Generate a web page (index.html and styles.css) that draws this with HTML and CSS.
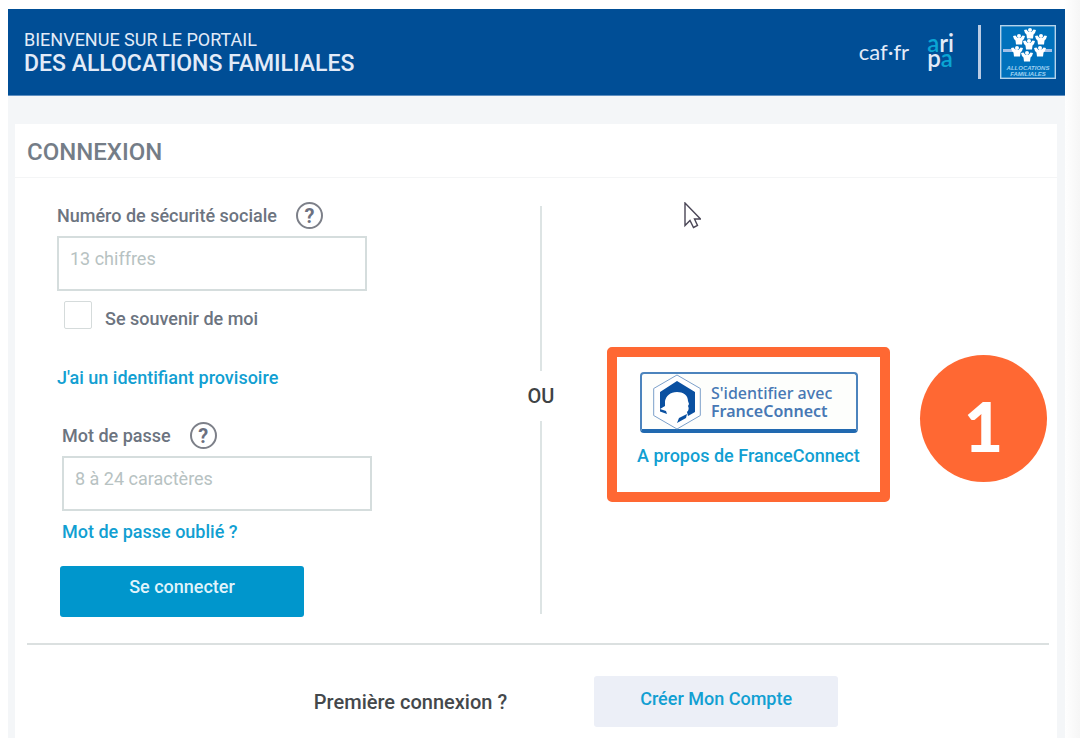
FILE: index.html
```html
<!DOCTYPE html>
<html lang="fr">
<head>
  <meta charset="UTF-8">
  <title>Connexion - Allocations familiales</title>
  <meta name="viewport" content="width=device-width, initial-scale=1.0">
  <link rel="stylesheet" href="styles.css">
</head>
<body>

  <div class="portal">
    <header class="top-bar">
      <div class="welcome">
        <div class="welcome-small">BIENVENUE SUR LE PORTAIL</div>
        <div class="welcome-big">DES ALLOCATIONS FAMILIALES</div>
      </div>
      <div class="brands">
        <span class="brand-caf">caf·fr</span>
        <span class="brand-aripa"><span><i>a</i>ri</span><span>p<i>a</i></span></span>
        <span class="brand-line"></span>
        <svg class="brand-logo" viewBox="0 0 56 54">
          <defs>
            <g id="figure">
              <circle cx="0" cy="-3" r="2"/>
              <path d="M-6 -3 L-3.500 -3.500 L-1.500 -1 L1.500 -1 L3.500 -3.500 L6 -3 L5 0 L3.500 1.500 L3 5.500 L-3 5.500 L-3.500 1.500 L-5 0 Z"/>
            </g>
          </defs>
          <rect x="0.7" y="0.7" width="54.6" height="52.6" fill="#0071bc" stroke="#b5d3ea" stroke-width="1.4"/>
          <path d="M3 25.500 H17 M39 25.500 H52" stroke="#a3bfe6" stroke-width="3"/>
          <g fill="#fff">
            <use href="#figure" x="30" y="8"/>
            <use href="#figure" x="19" y="14"/>
            <use href="#figure" x="41" y="14"/>
            <use href="#figure" x="29" y="19"/>
            <use href="#figure" x="17" y="26"/>
            <use href="#figure" x="40" y="26"/>
            <use href="#figure" x="27" y="31"/>
          </g>
          <text x="28" y="45" class="logo-text">ALLOCATIONS</text>
          <text x="28" y="51" class="logo-text">FAMILIALES</text>
        </svg>
      </div>
    </header>

    <main class="card">
      <h1 class="card-title">CONNEXION</h1>

      <div class="login">
        <form class="login-form">
          <div class="label-row">
            <label for="numero">Numéro de sécurité sociale</label>
            <button type="button" class="help" aria-label="Aide numéro">?</button>
          </div>
          <input type="text" id="numero" class="field" placeholder="13 chiffres">

          <div class="remember">
            <input type="checkbox" id="souvenir">
            <label for="souvenir">Se souvenir de moi</label>
          </div>

          <a href="#" class="link">J'ai un identifiant provisoire</a>

          <div class="password-group">
            <div class="label-row">
              <label for="motdepasse">Mot de passe</label>
              <button type="button" class="help" aria-label="Aide mot de passe">?</button>
            </div>
            <input type="password" id="motdepasse" class="field" placeholder="8 à 24 caractères">
            <a href="#" class="link">Mot de passe oublié ?</a>
          </div>

          <button type="submit" class="btn btn-primary">Se connecter</button>
        </form>

        <div class="separator">OU</div>

        <div class="other">
          <svg class="cursor" viewBox="0 0 17 27">
            <path d="M1 1 V23.500 L6 18.500 L9.500 25.500 L13.500 23.500 L10.500 17 H16.500 Z" fill="#fff" stroke="#4a4656" stroke-width="1.4"/>
          </svg>
          <div class="highlight">
            <button type="button" class="fc-button">
              <svg class="fc-logo" viewBox="0 0 48 56">
                <path d="M24 1 L47.300 14.500 V41.500 L24 55 L0.700 41.500 V14.500 Z" fill="#fff" stroke="#7b9fc9"/>
                <path d="M24 7 L42 18 V38 L35 42 L34 38 C36 36 36 34 35 32 L36 30 L35 27 C35 21 30 18 24 18 C17 18 13 22 12 27 L12 32 L7 35 V18 Z" fill="#0a50a1"/>
                <path d="M7 35 L13 37 L14 40 L7 37.500 Z M34 40 L33 44 L24 49 L26 44 Z" fill="#0a50a1"/>
              </svg>
              <span>S'identifier avec<br><b>FranceConnect</b></span>
            </button>
            <a href="#" class="link">A propos de FranceConnect</a>
            <span class="step">1</span>
          </div>
        </div>
      </div>

      <div class="first-time">
        <span>Première connexion ?</span>
        <button type="button" class="btn btn-light">Créer Mon Compte</button>
      </div>
    </main>
  </div>

</body>
</html>
```
FILE: styles.css
```css
* {
  box-sizing: border-box;
}
body {
  margin: 0;
  padding: 9px 15px 0 8px;
  min-height: 100vh;
  display: flex;
  font-family: Roboto, "Liberation Sans", sans-serif;
  font-size: 18px;
  font-weight: 500;
  line-height: 20px;
  color: #6c7480;
  background: linear-gradient(to left, #f6f6f6, #fff 16px);
}
button, input {
  font: inherit;
}
.portal {
  flex: 1;
  display: flex;
  flex-direction: column;
  background: #f4f6f8;
}

/* header */
.top-bar {
  display: flex;
  justify-content: space-between;
  align-items: center;
  height: 87px;
  padding: 0 9px 0 16px;
  background: #004e96;
  border-bottom: 1px solid #5f8fc0;
  color: #e3ebf8;
}
.welcome {
  line-height: 24px;
}
.welcome-small {
  font-weight: 400;
}
.welcome-big {
  font-size: 23px;
}
.brands {
  display: flex;
  align-items: center;
}
.brand-caf {
  font-family: Lato, sans-serif;
  font-size: 22px;
  font-weight: 400;
}
.brand-aripa {
  display: flex;
  flex-direction: column;
  margin-left: 18px;
  font-family: Lato, sans-serif;
  font-size: 24px;
  font-weight: 600;
  line-height: 15px;
  padding-bottom: 4px;
}
.brand-aripa i {
  font-style: normal;
  color: #0aa5d4;
}
.brand-line {
  width: 3px;
  height: 54px;
  margin: 0 19px 0 24px;
  background: #b9cbe4;
}
.brand-logo {
  width: 56px;
  height: 54px;
}
.logo-text {
  font: italic 700 6px "Liberation Sans", sans-serif;
  fill: #9fd0f0;
  text-anchor: middle;
}

/* card */
.card {
  flex: 1;
  margin: 28px 8px 0 7px;
  background: #fff;
}
.card-title {
  margin: 0;
  padding: 15px 12px 12px;
  font-size: 24px;
  font-weight: 500;
  line-height: 26px;
  color: #747d87;
  border-bottom: 1px solid #f4f5f6;
}
.login {
  display: grid;
  grid-template-columns: 1fr 40px 1fr;
  padding: 24px 32px 26px 42px;
}
.label-row {
  display: flex;
  align-items: center;
  gap: 19px;
  height: 27px;
  margin-bottom: 7px;
}
.help {
  width: 27px;
  height: 27px;
  padding: 0;
  border: 2px solid #7d8089;
  border-radius: 50%;
  background: none;
  color: #6c7080;
  font-size: 20px;
  font-weight: 700;
  line-height: 20px;
}
.field {
  display: block;
  width: 310px;
  height: 55px;
  padding: 0 11px 10px;
  border: 2px solid #d5dddd;
  background: #fff;
  font-weight: 400;
}
.field::placeholder {
  color: #b7c2c2;
  opacity: 1;
}
.remember {
  display: flex;
  align-items: center;
  gap: 13px;
  margin: 10px 0 39px 7px;
  height: 28px;
}
.remember input {
  appearance: none;
  width: 28px;
  height: 28px;
  margin: 0;
  border: 1px solid #d5dbdb;
  border-radius: 2px;
}
.remember label {
  padding-top: 8px;
}
.link {
  display: block;
  color: #129fd2;
  text-decoration: none;
}
.password-group {
  margin: 34px 0 24px 5px;
}
.password-group .link {
  margin-top: 11px;
}
.btn {
  display: block;
  width: 244px;
  height: 51px;
  padding: 0 0 10px;
  border: none;
  border-radius: 3px;
}
.btn-primary {
  margin-left: 3px;
  background: #0096cc;
  color: #dff3fb;
}
.btn-light {
  padding-bottom: 6px;
  background: #eceff7;
  color: #129fd2;
}

/* OU separator */
.separator {
  display: flex;
  flex-direction: column;
  align-items: center;
  margin: 4px 0 3px;
  line-height: 50px;
  font-size: 20px;
  color: #3f4345;
}
.separator::before,
.separator::after {
  content: "";
  flex: 6;
  width: 2px;
  background: #dde4e4;
}
.separator::after {
  flex: 7;
}

/* FranceConnect */
.other {
  position: relative;
  padding: 145px 0 0 46px;
}
.cursor {
  position: absolute;
  top: 0;
  left: 123px;
  width: 17px;
  height: 27px;
}
.highlight {
  position: relative;
  width: 283px;
  height: 155px;
  padding: 15px 20px;
  border: 10px solid #ff6833;
  border-radius: 5px;
}
.fc-button {
  display: flex;
  align-items: center;
  gap: 10px;
  width: 218px;
  height: 61px;
  margin: 0 0 13px 3px;
  padding: 0 0 0 11px;
  border: 2px solid #4c84bd;
  border-bottom: 4px solid #2169b0;
  border-radius: 4px;
  background: #fdfefc;
  color: #4778b4;
  font-family: "Noto Sans", sans-serif;
  font-size: 16px;
  line-height: 18px;
  text-align: left;
}
.fc-button b {
  font-weight: 600;
}
.fc-logo {
  width: 48px;
  height: 56px;
}
.highlight .link {
  white-space: nowrap;
}
.step {
  position: absolute;
  top: -2px;
  left: 303px;
  width: 127px;
  height: 127px;
  border-radius: 50%;
  background: #ff6833;
  color: #fff;
  font-family: Lato, sans-serif;
  font-size: 68px;
  font-weight: 900;
  line-height: 142px;
  text-align: center;
}

/* first connexion */
.first-time {
  display: flex;
  justify-content: center;
  align-items: center;
  gap: 87px;
  margin: 0 8px 0 12px;
  padding: 31px 0 11px 76px;
  border-top: 2px solid #dbe0e0;
  font-size: 20px;
  color: #44484b;
}
.btn-light {
  font-size: 18px;
}
```
